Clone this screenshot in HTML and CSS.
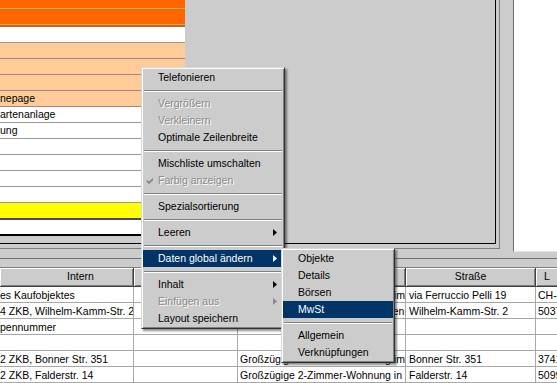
FILE: index.html
```html
<!DOCTYPE html>
<html>
<head>
<meta charset="utf-8">
<link rel="stylesheet" href="styles.css">
</head>
<body>
<div class="screen">
  <div class="top">
    <div class="frame">
      <div class="box">
        <div class="grid">
          <div class="row orange r1"></div>
          <div class="row orange r2"></div>
          <div class="row white"></div>
          <div class="row peach"></div>
          <div class="row peach"></div>
          <div class="row peach"></div>
          <div class="row peach"><span>nepage</span></div>
          <div class="row white"><span>artenanlage</span></div>
          <div class="row white"><span>ung</span></div>
          <div class="row white"></div>
          <div class="row white"></div>
          <div class="row white"></div>
          <div class="row white"></div>
          <div class="row yellow"></div>
          <div class="row white last"></div>
        </div>
      </div>
    </div>
    <div class="gap"></div>
    <div class="side"></div>
  </div>
  <div class="band"></div>
  <div class="list">
    <div class="tr head">
      <div class="th first">Intern</div><div class="th"></div><div class="th"></div><div class="th">Straße</div><div class="th last-col">L</div>
    </div>
    <div class="tr"><div class="td">es Kaufobjektes</div><div class="td"></div><div class="td">Großzügige 2-Zimmer-Wohnung im Zentrum</div><div class="td">via Ferruccio Pelli 19</div><div class="td">CH-6900</div></div>
    <div class="tr"><div class="td">4 ZKB, Wilhelm-Kamm-Str. 2</div><div class="td"></div><div class="td">Schöne 4-Zimmer-Wohnung in Benl</div><div class="td">Wilhelm-Kamm-Str. 2</div><div class="td">50374</div></div>
    <div class="tr"><div class="td">pennummer</div><div class="td"></div><div class="td"></div><div class="td"></div><div class="td"></div></div>
    <div class="tr"><div class="td"></div><div class="td"></div><div class="td"></div><div class="td"></div><div class="td"></div></div>
    <div class="tr"><div class="td">2 ZKB, Bonner Str. 351</div><div class="td"></div><div class="td">Großzügige 2-Zimmer-Wohnung im Zentrum</div><div class="td">Bonner Str. 351</div><div class="td">37412</div></div>
    <div class="tr"><div class="td">2 ZKB, Falderstr. 14</div><div class="td"></div><div class="td">Großzügige 2-Zimmer-Wohnung in Köln</div><div class="td">Falderstr. 14</div><div class="td">50999</div></div>
  </div>

  <div class="menu main-menu">
    <div class="item">Telefonieren</div>
    <div class="sep"></div>
    <div class="item disabled">Vergrößern</div>
    <div class="item disabled">Verkleinern</div>
    <div class="item">Optimale Zeilenbreite</div>
    <div class="sep"></div>
    <div class="item">Mischliste umschalten</div>
    <div class="item disabled"><svg class="check" width="8" height="8" viewBox="0 0 8 8"><path d="M1 3.5 L3 5.5 L7 1.5 M1 4.5 L3 6.5 L7 2.5" stroke="#8a8a8a" stroke-width="1.2" fill="none"/></svg>Farbig anzeigen</div>
    <div class="sep"></div>
    <div class="item">Spezialsortierung</div>
    <div class="sep"></div>
    <div class="item sub">Leeren<svg class="arrow" width="4" height="7" viewBox="0 0 4 7"><polygon points="0,0 4,3.5 0,7" fill="#000"/></svg></div>
    <div class="sep"></div>
    <div class="item sub active">Daten global ändern<svg class="arrow" width="4" height="7" viewBox="0 0 4 7"><polygon points="0,0 4,3.5 0,7" fill="#fff"/></svg></div>
    <div class="sep"></div>
    <div class="item sub">Inhalt<svg class="arrow" width="4" height="7" viewBox="0 0 4 7"><polygon points="0,0 4,3.5 0,7" fill="#000"/></svg></div>
    <div class="item sub disabled">Einfügen aus<svg class="arrow" width="4" height="7" viewBox="0 0 4 7"><polygon points="0,0 4,3.5 0,7" fill="#8a8a8a"/></svg></div>
    <div class="item">Layout speichern</div>
  </div>

  <div class="menu sub-menu">
    <div class="item">Objekte</div>
    <div class="item">Details</div>
    <div class="item">Börsen</div>
    <div class="item active">MwSt</div>
    <div class="sep"></div>
    <div class="item">Allgemein</div>
    <div class="item">Verknüpfungen</div>
  </div>
</div>
</body>
</html>
```

FILE: styles.css
```css
* { box-sizing: border-box; }
html, body { margin: 0; padding: 0; }
body {
  width: 557px;
  height: 383px;
  overflow: hidden;
  background: #cccccc;
  font-family: "Liberation Sans", Arial, sans-serif;
  font-size: 10.5px;
  color: #000;
}
.screen { position: relative; width: 557px; height: 383px; overflow: hidden; }

.top { display: flex; height: 250px; }
.frame {
  width: 500px; height: 249px;
  border-right: 1px solid #808080;
  border-bottom: 1px solid #808080;
  flex: none;
}
.box {
  width: 496px; height: 244px;
  border-right: 1px solid #000;
  border-bottom: 1px solid #000;
}
.grid { width: 185px; }
.row {
  height: 16px;
  border-bottom: 1px solid #9a9a9a;
  line-height: 15px;
  white-space: nowrap;
  overflow: hidden;
}
.orange { background: #ff6600; }
.r1 { height: 10px; border-bottom: 1px solid #b87a3a; box-shadow: inset 0 -1px 0 #f0a030; }
.r2 { height: 17px; border-bottom: 2px solid #a8703a; box-shadow: inset 0 -1px 0 #f0a030; }
.peach { background: #ffcc99; border-bottom-color: #a08888; }
.white { background: #fff; }
.yellow { background: #ffff00; height: 17px; border-bottom: 2px solid #46467a; }
.last { height: 16px; border-bottom: 2px solid #000; }

.gap { width: 13px; flex: none; }
.side {
  flex: 1;
  background: #fff;
  border-left: 1px solid #707070;
  border-bottom: 1px solid #e4e4e4;
  height: 252px;
}
.band {
  height: 18px;
  background: linear-gradient(#cccccc 0, #cccccc 8px, #707070 8px, #707070 9px, #cccccc 9px, #cccccc 17px, #808080 17px);
}

.list { width: 584px; background: #fff; }
.tr {
  display: grid;
  grid-template-columns: 134px 104px 168px 130px 48px;
  height: 16px;
}
.tr.head { height: 19px; }
.th {
  background: #cccccc;
  text-align: center;
  line-height: 17px;
  border-right: 1px solid #404040;
  border-bottom: 1px solid #404040;
  box-shadow: inset 1px 1px 0 #fff, inset -1px -1px 0 #808080;
  white-space: nowrap;
  overflow: hidden;
}
.th.first { padding-left: 28px; }
.th.last-col { text-align: left; padding-left: 8px; }
.td {
  border-right: 1px solid #a8a8a8;
  border-bottom: 1px solid #a8a8a8;
  padding-left: 2px;
  line-height: 16px;
  white-space: nowrap;
  overflow: hidden;
}
.td:nth-child(1) { padding-left: 0; }
.td:nth-child(4) { padding-left: 3px; }
.td:nth-child(5) { padding-left: 2px; }

.menu {
  position: absolute;
  background: #cccccc;
  border-top: 1px solid #d8d8d8;
  border-left: 1px solid #d8d8d8;
  border-right: 1px solid #303030;
  border-bottom: 1px solid #303030;
  box-shadow: inset 1px 1px 0 #fff, inset -1px -1px 0 #808080, 2px 2px 2px rgba(0,0,0,0.45);
  padding: 1px;
}
.main-menu { left: 141px; top: 67px; width: 144px; }
.sub-menu { left: 281px; top: 248px; width: 114px; }
.item {
  position: relative;
  height: 17px;
  line-height: 17px;
  padding-left: 15px;
  white-space: nowrap;
}
.item.active { background: #003366; color: #fff; }
.item.disabled { color: #8a8a8a; text-shadow: 1px 1px 0 #fff; }
.sep {
  height: 9px;
  margin: 0 1px;
  background: linear-gradient(#cccccc 0, #cccccc 4px, #808080 4px, #808080 5px, #fff 5px, #fff 6px, #cccccc 6px);
}
.arrow { position: absolute; right: 6px; top: 5px; }
.check { position: absolute; left: 3px; top: 5px; }
```
